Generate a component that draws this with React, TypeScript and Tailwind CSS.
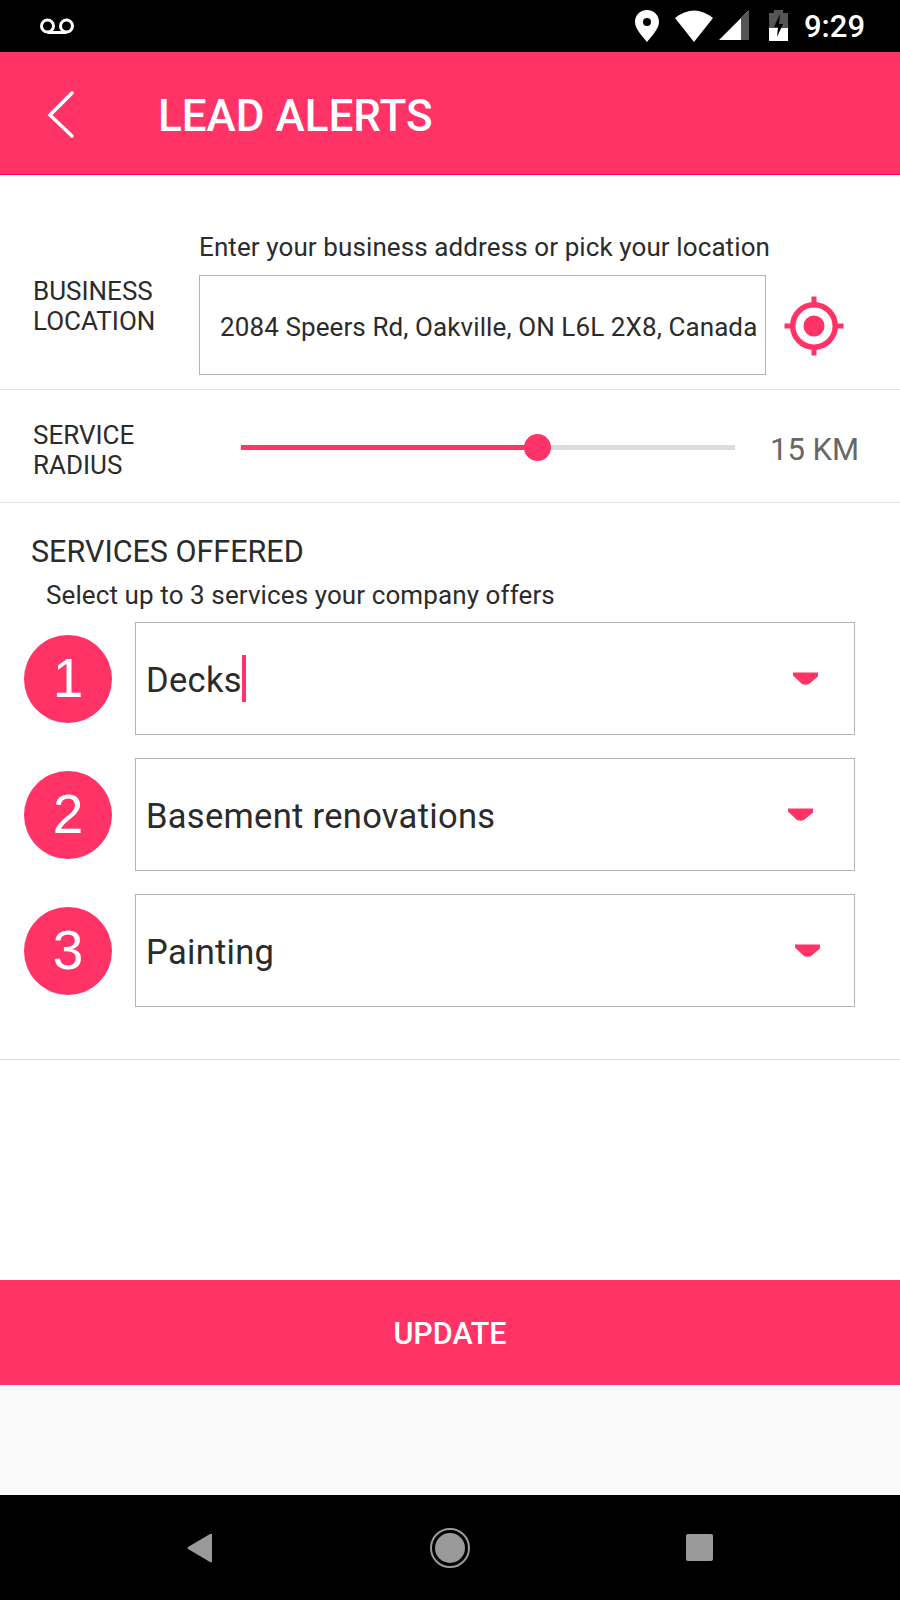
import React from "react";

const PINK = "#ff3366";

function Row({ n, text, caret, arrowMr }: { n: string; text: string; caret?: boolean; arrowMr: string }) {
  return (
    <div className="flex items-center">
      <div className="ml-6 flex h-[88px] w-[88px] shrink-0 items-center justify-center rounded-full bg-[#ff3366] font-['Liberation_Sans',sans-serif] text-[55px] leading-none text-white">
        {n}
      </div>
      <div className="ml-[23px] flex h-[113px] w-[720px] items-center border border-[#b5b5b5] pl-[10px]">
        <span className="pt-[3px] text-[34.5px] leading-none tracking-[0.3px] text-[#2b2b2b]">{text}</span>
        {caret && <span className="h-[47px] w-[4px] bg-[#ff3366]" />}
        <svg className={"ml-auto " + arrowMr} width="26" height="15" viewBox="0 0 26 14">
          <path d="M1 1H26V5L17 12.5Q13.5 14 10 12.5L1 4Z" fill={PINK} />
        </svg>
      </div>
    </div>
  );
}

export default function App() {
  return (
    <div className="flex h-[1600px] w-[900px] flex-col overflow-hidden bg-white font-['Roboto',sans-serif] text-[#2b2b2b]">
      {/* Status bar */}
      <div className="flex h-[52px] shrink-0 items-center bg-black pl-[40px] pr-[35px] text-white">
        <svg width="34" height="16" viewBox="0 0 34 16" fill="none" stroke="white" strokeWidth="3">
          <circle cx="7.5" cy="8" r="6" />
          <circle cx="26.5" cy="8" r="6" />
          <path d="M7.5 14.5H26.5" />
        </svg>
        <div className="ml-auto flex items-center">
          <svg width="24" height="32" viewBox="0 0 24 32">
            <path fillRule="evenodd" d="M12 0C5 0 0 5 0 12C0 19 8 27 12 32C16 27 24 19 24 12C24 5 19 0 12 0ZM12 8A4 4 0 1 1 12 16A4 4 0 1 1 12 8Z" fill="white" />
          </svg>
          <svg className="ml-[16px]" width="38" height="32" viewBox="0 0 38 32">
            <path d="M0 8Q19 -7 38 8L19 32Z" fill="white" />
          </svg>
          <svg className="ml-[6px]" width="31" height="32" viewBox="0 0 31 32">
            <path d="M0 30L29 1V30Z" fill="white" />
            <path d="M22 8L30 0V30H22Z" fill="#555" />
          </svg>
          <svg className="ml-[19px]" width="20" height="32" viewBox="0 0 20 32">
            <path d="M5 0H14V3H19V18H0V3H5Z" fill="#555" />
            <path d="M0 18H19V31H0Z" fill="white" />
            <path d="M11 4L5 17H9L8 27L14 14H10Z" fill="black" />
          </svg>
          <span className="ml-[15px] text-[31px] font-medium leading-none">9:29</span>
        </div>
      </div>

      {/* Header */}
      <div className="flex h-[123px] shrink-0 items-center border-b border-[#f5005a] bg-[#ff3366] pl-[45px]">
        <svg className="mt-[4px]" width="34" height="52" viewBox="0 0 34 52" fill="none" stroke="white" strokeWidth="3.5" strokeLinecap="round">
          <path d="M27 4L5 26L27 47" />
        </svg>
        <span className="ml-[79px] pt-[6px] text-[44px] font-medium leading-none text-white">LEAD ALERTS</span>
      </div>

      {/* Location */}
      <div className="flex h-[215px] shrink-0 border-b border-[#e2e2e2] pt-[57px]">
        <div className="ml-[33px] w-[166px] pt-[44px] text-[26px] leading-[30px]">
          BUSINESS
          <br />
          LOCATION
        </div>
        <div className="flex w-[567px] flex-col">
          <div className="whitespace-nowrap text-[26px] leading-[30px] tracking-[0.1px]">Enter your business address or pick your location</div>
          <div className="mt-[13px] flex h-[100px] w-[567px] items-center whitespace-nowrap border border-[#b5b5b5] pl-[20px] pt-[3px] text-[26px] leading-none tracking-[0.1px]">
            2084 Speers Rd, Oakville, ON L6L 2X8, Canada
          </div>
        </div>
        <svg className="ml-[18px] mt-[64px]" width="60" height="60" viewBox="0 0 60 60" fill="none" stroke={PINK}>
          <circle cx="30" cy="30" r="21.25" strokeWidth="5.5" />
          <circle cx="30" cy="30" r="10.5" fill={PINK} strokeWidth="0" />
          <path d="M30 0.5V8M30 52V59.5M0.5 30H8M52 30H59.5" strokeWidth="5" />
        </svg>
      </div>

      {/* Radius */}
      <div className="flex h-[113px] shrink-0 items-center border-b border-[#e2e2e2]">
        <div className="ml-[33px] w-[208px] pt-[8px] text-[26px] leading-[30px]">
          SERVICE
          <br />
          RADIUS
        </div>
        <div className="relative mt-[2px] h-[5px] w-[494px] bg-[#dcdcdc]">
          <div className="h-full w-[296px] bg-[#ff3366]" />
          <div className="absolute left-[283px] top-[-11px] h-[27px] w-[27px] rounded-full bg-[#ff3366]" />
        </div>
        <div className="ml-[35px] pt-[6px] text-[31px] leading-none text-[#666]">15 KM</div>
      </div>

      {/* Services */}
      <div className="flex h-[557px] shrink-0 flex-col border-b border-[#dcdcdc]">
        <div className="ml-[31px] mt-[32px] text-[30.5px] leading-[34px]">SERVICES OFFERED</div>
        <div className="ml-[46px] mt-[11px] text-[26px] leading-[30px] tracking-[0.1px]">Select up to 3 services your company offers</div>
        <div className="mt-[12px] flex flex-col gap-[23px]">
          <Row n="1" text="Decks" caret arrowMr="mr-[36px]" />
          <Row n="2" text="Basement renovations" arrowMr="mr-[41px]" />
          <Row n="3" text="Painting" arrowMr="mr-[34px]" />
        </div>
      </div>

      <div className="flex-1" />

      {/* Update */}
      <div className="flex h-[105px] shrink-0 items-center justify-center bg-[#ff3366] pt-[4px] text-[30.5px] font-medium leading-none text-white">
        UPDATE
      </div>
      <div className="h-[110px] shrink-0 bg-[#f9f9f9]" />

      {/* Nav */}
      <div className="flex h-[105px] shrink-0 items-center bg-black">
        <svg className="ml-[187px]" width="26" height="30" viewBox="0 0 26 30">
          <path d="M25 2V28Q25 30 23 29L1 16Q0 15 1 14L23 1Q25 0 25 2Z" fill="#9a9a9a" />
        </svg>
        <svg className="ml-[217px]" width="40" height="40" viewBox="0 0 40 40">
          <circle cx="20" cy="20" r="19" fill="none" stroke="#9a9a9a" strokeWidth="2" />
          <circle cx="20" cy="20" r="15" fill="#9a9a9a" />
        </svg>
        <div className="ml-[216px] h-[27px] w-[27px] rounded-[2px] bg-[#9a9a9a]" />
      </div>
    </div>
  );
}
